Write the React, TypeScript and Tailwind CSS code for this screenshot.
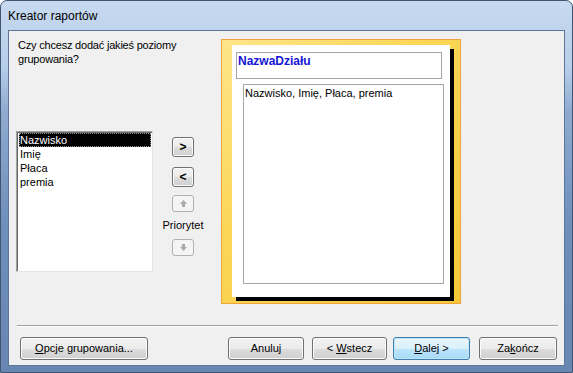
import type { ReactNode } from "react"

const font = { fontFamily: '"Liberation Sans", Arial, sans-serif' }

function WinButton({
  children,
  className = "",
  primary = false,
}: {
  children: ReactNode
  className?: string
  primary?: boolean
}) {
  return (
    <div
      className={`flex items-center justify-center h-[23px] rounded-[3px] border text-[11px] text-black ${
        primary
          ? "border-[#3c7fb1] bg-[linear-gradient(180deg,#eaf6fd_0%,#d9f0fc_50%,#bee6fd_51%,#a7d9f5_100%)] shadow-[inset_0_0_0_1px_#c2e4f6]"
          : "border-[#707070] bg-[linear-gradient(180deg,#f2f2f2_0%,#ebebeb_50%,#dddddd_51%,#cfcfcf_100%)] shadow-[inset_0_0_0_1px_#fcfcfc]"
      } ${className}`}
    >
      {children}
    </div>
  )
}

function ArrowIcon({ down = false }: { down?: boolean }) {
  return (
    <svg width="9" height="9" viewBox="0 0 9 9" className={down ? "rotate-180" : ""}>
      <path d="M4.5 1 L8 5 H6 V8 H3 V5 H1 Z" fill="#a9a9a9" />
    </svg>
  )
}

const fields = ["Nazwisko", "Imię", "Płaca", "premia"]

export default function App() {
  return (
    <div className="w-[573px] h-[373px] bg-white" style={font}>
      <div className="w-[573px] h-[373px] flex flex-col rounded-t-[7px] border border-[#3f5573] bg-[linear-gradient(180deg,#c6daf0_0%,#b7cee9_18%,#8eaad0_30%,#6e8fba_60%,#6787b2_100%)]">
        {/* title bar */}
        <div className="h-[29px] flex items-center pl-[7px] text-[12px] text-black">
          Kreator raportów
        </div>

        {/* client area */}
        <div className="mx-[7px] h-[336px] border border-[#5d7596] bg-[#f0f0f0] flex flex-col">
          <div className="h-[294px] flex">
            {/* question + field list */}
            <div className="ml-[7px] w-[137px] shrink-0 flex flex-col">
              <div className="mt-[7px] pl-[2px] text-[11px] leading-[14px] tracking-[-0.2px] whitespace-nowrap text-black">
                Czy chcesz dodać jakieś poziomy
                <br />
                grupowania?
              </div>
              <div className="mt-[65px] w-[137px] h-[141px] border border-[#a0a0a0] border-r-[#e3e3e3] border-b-[#e3e3e3] bg-white shadow-[inset_1px_1px_0_#696969] p-[1px]">
                {fields.map((f, i) => (
                  <div
                    key={f}
                    className={`h-[14px] leading-[14px] text-[11px] pl-[1px] ml-[1px] ${
                      i === 0
                        ? "bg-black text-white outline outline-1 outline-dotted outline-[#9a9a9a] -outline-offset-1"
                        : "text-black"
                    }`}
                  >
                    {f}
                  </div>
                ))}
              </div>
            </div>

            {/* move buttons */}
            <div className="ml-[7px] w-[46px] shrink-0 flex flex-col items-center pt-[106px]">
              <WinButton className="w-[22px] !h-[20px] font-bold text-[12px]">&gt;</WinButton>
              <WinButton className="mt-[10px] w-[22px] !h-[20px] font-bold text-[12px]">&lt;</WinButton>
              <div className="mt-[8px] w-[22px] h-[17px] rounded-[3px] border border-[#adb2b5] bg-[#f4f4f4] flex items-center justify-center">
                <ArrowIcon />
              </div>
              <div className="mt-[6px] text-[11px] leading-[14px] text-black">Priorytet</div>
              <div className="mt-[7px] w-[22px] h-[17px] rounded-[3px] border border-[#adb2b5] bg-[#f4f4f4] flex items-center justify-center">
                <ArrowIcon down />
              </div>
            </div>

            {/* preview */}
            <div className="ml-[15px] mt-[8px] w-[240px] h-[265px] shrink-0 border border-[#f0a53c] bg-[linear-gradient(135deg,#fde58a_0%,#fbd657_40%,#f8c838_100%)] pl-[10px] pt-[5px]">
              <div className="w-[218px] h-[252px] bg-white shadow-[4px_4px_0_#000] flex flex-col">
                <div className="ml-[4px] mt-[7px] w-[206px] h-[27px] border border-[#a6a6a6] pl-[1px] pt-[1px] text-[12px] leading-[14px] font-bold text-[#1515d6]">
                  NazwaDziału
                </div>
                <div className="ml-[11px] mt-[5px] w-[201px] h-[200px] border border-[#a6a6a6] pl-[1px] pt-[1px] text-[11px] leading-[14px] text-black">
                  Nazwisko, Imię, Płaca, premia
                </div>
              </div>
            </div>
          </div>

          {/* separator */}
          <div className="ml-[8px] mr-[6px] border-t border-[#a0a0a0] border-b border-b-white" />

          {/* bottom buttons */}
          <div className="mt-[10px] flex">
            <WinButton className="ml-[11px] w-[128px]">
              <span>
                <span className="underline">O</span>pcje grupowania...
              </span>
            </WinButton>
            <WinButton className="ml-[80px] w-[76px]">Anuluj</WinButton>
            <WinButton className="ml-[8px] w-[75px]">
              <span>
                &lt; <span className="underline">W</span>stecz
              </span>
            </WinButton>
            <WinButton primary className="ml-[6px] w-[77px]">
              <span>
                <span className="underline">D</span>alej &gt;
              </span>
            </WinButton>
            <WinButton className="ml-[9px] w-[78px]">
              <span>
                Za<span className="underline">k</span>ończ
              </span>
            </WinButton>
          </div>
        </div>
      </div>
    </div>
  )
}
